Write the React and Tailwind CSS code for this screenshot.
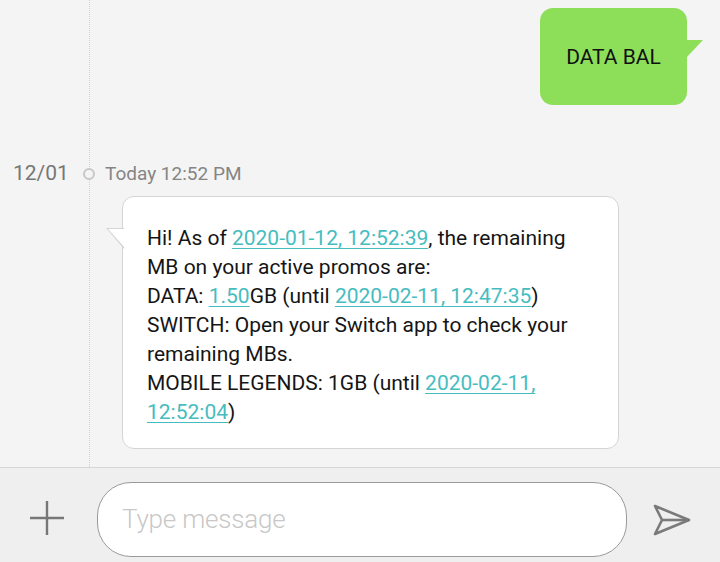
import React from 'react'

const Link = ({ children }) => (
  <span className="text-[#45bdbf] underline decoration-1 underline-offset-[3px]">{children}</span>
)

const SendIcon = () => (
  <svg width="40" height="34" viewBox="0 0 40 34" fill="none" stroke="#7a7a7a" strokeWidth="2.6" strokeLinejoin="round">
    <path d="M3 3 L37 17 L3 31 L10 17 Z" />
    <path d="M10 17 L37 17" />
  </svg>
)

const PlusIcon = () => (
  <svg width="36" height="36" viewBox="0 0 36 36" stroke="#777" strokeWidth="2.4">
    <path d="M18 1 V35 M1 18 H35" />
  </svg>
)

export default function App() {
  return (
    <div className="flex h-[562px] w-[720px] flex-col overflow-hidden bg-[#f4f4f4] font-['Roboto',sans-serif]">
      {/* conversation */}
      <div className="relative flex-1">
        <div className="absolute left-[89px] top-0 h-full border-l border-dotted border-[#d2d2d2]" />

        <div className="flex justify-end pt-[8px] pr-[33px]">
          <div className="relative flex h-[97px] w-[147px] items-center justify-center rounded-[13px] bg-[#8ddf59] pt-[2px] text-[21px] text-[#111]">
            DATA BAL
            <div className="absolute left-[146px] top-[32px] h-[18px] w-[17px] bg-[#8ddf59] [clip-path:polygon(0_0,100%_0,0_100%)]" />
          </div>
        </div>

        <div className="relative mt-[57px] flex h-[24px] items-center">
          <span className="ml-[13px] w-[58px] text-[21px] text-[#777]">12/01</span>
          <span className="ml-[12px] h-[12px] w-[12px] rounded-full border-[2.5px] border-[#c8c8c8] bg-[#f4f4f4]" />
          <span className="ml-[10px] text-[19px] text-[#858585]">Today 12:52 PM</span>
        </div>

        <div className="relative ml-[122px] mt-[10px] w-[497px] rounded-[12px] border border-[#d4d4d4] bg-white pl-[24px] pt-[27px] pb-[21px] text-[21px] leading-[29px] text-[#151515]">
          <div className="absolute left-[-17px] top-[31px] h-[21px] w-[18px] bg-[#d4d4d4] [clip-path:polygon(0_0,100%_0,100%_100%)]" />
          <div className="absolute left-[-15px] top-[32px] h-[19px] w-[17px] bg-white [clip-path:polygon(0_0,100%_0,100%_100%)]" />
          <div>Hi! As of <Link>2020-01-12, 12:52:39</Link>, the remaining</div>
          <div>MB on your active promos are:</div>
          <div>DATA: <Link>1.50</Link>GB (until <Link>2020-02-11, 12:47:35</Link>)</div>
          <div>SWITCH: Open your Switch app to check your</div>
          <div>remaining MBs.</div>
          <div>MOBILE LEGENDS: 1GB (until <Link>2020-02-11,</Link></div>
          <div><Link>12:52:04</Link>)</div>
        </div>
      </div>

      {/* composer */}
      <div className="flex h-[95px] items-start border-t border-[#d6d6d6] bg-[#efefef] pt-[14px]">
        <div className="ml-[29px] mt-[18px] flex items-center">
          <PlusIcon />
        </div>
        <div className="ml-[32px] flex h-[75px] w-[530px] items-center rounded-[34px] border border-[#9a9a9a] bg-white pl-[24px]">
          <span className="text-[26px] font-light tracking-[-0.2px] text-[#c8c8c8]">Type message</span>
        </div>
        <div className="ml-[25px] mt-[21px]">
          <SendIcon />
        </div>
      </div>
    </div>
  )
}
